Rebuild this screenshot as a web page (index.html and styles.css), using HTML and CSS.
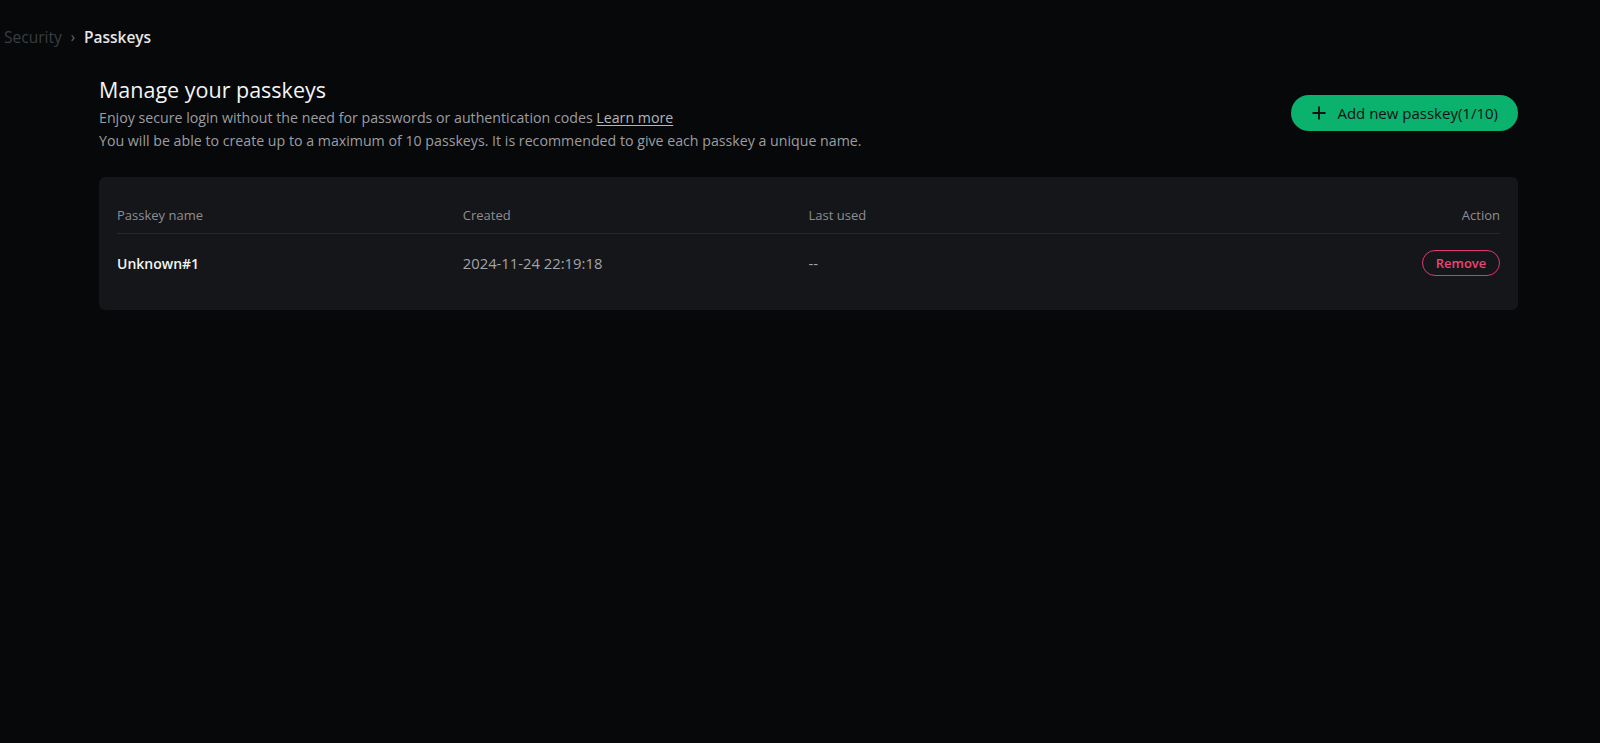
FILE: index.html
```html
<!DOCTYPE html>
<html lang="en">
<head>
<meta charset="utf-8">
<title>Passkeys</title>
<link rel="stylesheet" href="styles.css">
</head>
<body>
<nav class="crumbs">
  <span class="crumb-prev">Security</span>
  <span class="crumb-sep">›</span>
  <span class="crumb-cur">Passkeys</span>
</nav>
<main class="page">
  <header class="head">
    <div class="head-text">
      <h1 class="title">Manage your passkeys</h1>
      <p class="desc">Enjoy secure login without the need for passwords or authentication codes <a class="learn" href="#">Learn more</a></p>
      <p class="desc">You will be able to create up to a maximum of 10 passkeys. It is recommended to give each passkey a unique name.</p>
    </div>
    <button class="add-btn" type="button">
      <svg class="plus" width="14" height="14" viewBox="0 0 14 14"><path d="M7 0.5V13.5M0.5 7H13.5" stroke="currentColor" stroke-width="1.8" fill="none"/></svg>
      <span>Add new passkey(1/10)</span>
    </button>
  </header>
  <section class="card">
    <div class="row row-head">
      <div class="cell">Passkey name</div>
      <div class="cell">Created</div>
      <div class="cell">Last used</div>
      <div class="cell cell-right">Action</div>
    </div>
    <div class="row row-data">
      <div class="cell name">Unknown#1</div>
      <div class="cell muted">2024-11-24 22:19:18</div>
      <div class="cell muted">--</div>
      <div class="cell cell-right"><button class="remove" type="button">Remove</button></div>
    </div>
  </section>
</main>
</body>
</html>
```
FILE: styles.css
```css
* { box-sizing: border-box; }
html, body { margin: 0; padding: 0; }
body {
  background: #07080a;
  color: #f2f2f2;
  font-family: "Open Sans", Roboto, "Liberation Sans", sans-serif;
  min-height: 743px;
}
.crumbs {
  display: flex;
  align-items: center;
  gap: 9px;
  padding: 26px 0 0 4px;
  height: 48px;
  font-size: 15.5px;
  line-height: 22px;
}
.crumb-prev { color: #3b3d42; }
.crumb-sep { color: #6b6d72; font-size: 14px; }
.crumb-cur { color: #e6e6e6; font-weight: 600; }
.page {
  margin: 0 82px 0 99px;
}
.head {
  display: flex;
  justify-content: space-between;
  align-items: flex-start;
  padding-top: 28px;
}
.title {
  margin: 0;
  font-size: 21.5px;
  line-height: 28px;
  font-weight: 500;
  color: #f5f5f5;
}
.desc {
  margin: 0;
  font-size: 14.2px;
  line-height: 23px;
  color: #9c9da1;
}
.title + .desc { margin-top: 2px; }
.learn {
  color: #b4b5b8;
  text-decoration: underline;
  text-underline-offset: 2px;
}
.add-btn {
  margin-top: 19px;
  display: flex;
  align-items: center;
  gap: 11px;
  height: 36px;
  padding: 0 20px 0 21px;
  border: none;
  border-radius: 18px;
  background: #0bb26e;
  color: #101113;
  font-family: inherit;
  font-size: 15px;
  font-weight: 500;
}
.plus { display: block; }
.card {
  margin-top: 25px;
  background: #15161a;
  border-radius: 6px;
  padding: 20px 18px 18px;
}
.row {
  display: grid;
  grid-template-columns: repeat(4, 1fr);
  align-items: center;
}
.row-head {
  height: 37px;
  border-bottom: 1px solid #26282c;
  font-size: 13px;
  color: #8d8e92;
}
.row-head .cell { padding-bottom: 1px; }
.row-data {
  height: 58px;
  font-size: 14px;
}
.name { color: #f4f4f4; font-weight: 600; }
.muted { color: #a3a4a8; font-size: 14.8px; }
.cell-right { display: flex; justify-content: flex-end; }
.remove {
  height: 26px;
  width: 78px;
  border: 1px solid #e0376a;
  border-radius: 13px;
  background: transparent;
  color: #ec4475;
  font-family: inherit;
  font-size: 13px;
  font-weight: 600;
  padding: 0;
}
```
